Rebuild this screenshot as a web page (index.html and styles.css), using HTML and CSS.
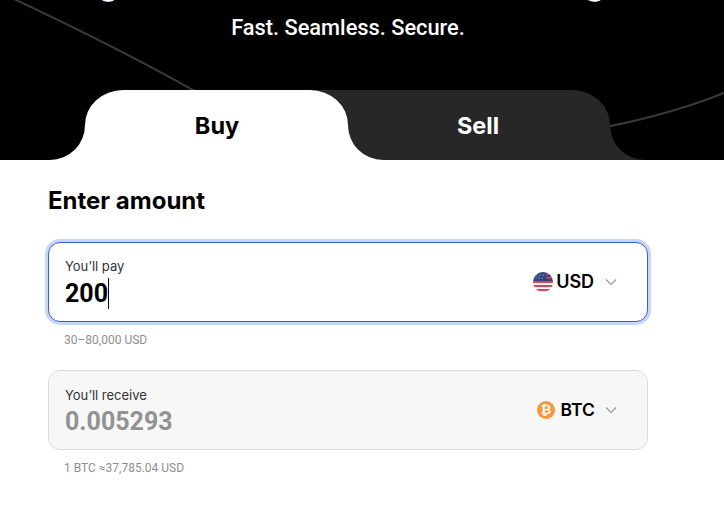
FILE: index.html
```html
<!DOCTYPE html>
<html lang="en">
<head>
<meta charset="utf-8">
<title>Buy crypto</title>
<link rel="stylesheet" href="styles.css">
</head>
<body>
<header class="hero">
  <svg class="hero-lines" width="724" height="160" viewBox="0 0 724 160" aria-hidden="true">
    <path d="M14 -1 C 80 30, 140 60, 200 94" />
    <path d="M606 127 C 650 118, 690 107, 726 92" />
  </svg>
  <p class="hero-title"><span>g</span><span>g</span></p>
  <p class="hero-sub">Fast. Seamless. Secure.</p>
  <div class="tabs">
    <svg class="tab-shape" width="724" height="70" viewBox="0 0 724 70" aria-hidden="true">
      <path class="sell-shape" d="M300 0 H572 A38 35 0 0 1 610 35 A35 35 0 0 0 645 70 H300 Z" />
      <path class="buy-shape" d="M50 70 A35 35 0 0 0 85 35 A38 35 0 0 1 123 0 H310 A38 35 0 0 1 348 35 A35 35 0 0 0 383 70 Z" />
    </svg>
    <div class="tab-labels">
      <span class="tab tab-buy">Buy</span>
      <span class="tab tab-sell">Sell</span>
    </div>
  </div>
</header>
<main class="content">
  <h1 class="title">Enter amount</h1>
  <section class="field field-active">
    <div class="field-text">
      <span class="field-label">You’ll pay</span>
      <span class="field-value">200<i class="caret"></i></span>
    </div>
    <div class="currency currency-usd">
      <svg class="cur-icon" width="20" height="20" viewBox="0 0 20 20" aria-hidden="true">
        <defs><clipPath id="flag"><circle cx="10" cy="10" r="10"/></clipPath></defs>
        <g clip-path="url(#flag)">
          <rect width="20" height="20" fill="#f2f0f2"/>
          <rect y="9" width="20" height="2" fill="#cf4a5c"/>
          <rect y="13" width="20" height="2" fill="#cf4a5c"/>
          <rect y="17" width="20" height="2" fill="#cf4a5c"/>
          <rect width="20" height="9" fill="#33457e"/>
          <rect y="5" x="13" width="7" height="1.6" fill="#cf4a5c"/>
          <rect y="1.5" x="13" width="7" height="1.6" fill="#cf4a5c"/>
          <g fill="#c6cbe0"><circle cx="4" cy="3" r=".6"/><circle cx="7" cy="3" r=".6"/><circle cx="10" cy="3" r=".6"/><circle cx="3" cy="6" r=".6"/><circle cx="6" cy="6" r=".6"/><circle cx="9" cy="6" r=".6"/></g>
        </g>
      </svg>
      <span class="cur-code">USD</span>
      <svg class="chev" width="12" height="8" viewBox="0 0 12 8" aria-hidden="true"><path d="M1 1.5 L6 6.5 L11 1.5"/></svg>
    </div>
  </section>
  <p class="hint">30–80,000 USD</p>
  <section class="field field-muted">
    <div class="field-text">
      <span class="field-label">You’ll receive</span>
      <span class="field-value value-muted">0.005293</span>
    </div>
    <div class="currency currency-btc">
      <svg class="cur-icon" width="18" height="18" viewBox="0 0 18 18" aria-hidden="true">
        <circle cx="9" cy="9" r="9" fill="#f7983c"/>
        <text x="9" y="13.2" text-anchor="middle" class="btc-glyph">₿</text>
      </svg>
      <span class="cur-code">BTC</span>
      <svg class="chev" width="12" height="8" viewBox="0 0 12 8" aria-hidden="true"><path d="M1 1.5 L6 6.5 L11 1.5"/></svg>
    </div>
  </section>
  <p class="hint">1 BTC ≈37,785.04 USD</p>
</main>
</body>
</html>
```
FILE: styles.css
```css
* { box-sizing: border-box; }
html, body { margin: 0; padding: 0; background: #fff; }
body { width: 724px; height: 525px; overflow: hidden; font-family: Inter, "Liberation Sans", sans-serif; color: #000; }
.hero { position: relative; height: 160px; background: #000; display: flex; flex-direction: column; overflow: hidden; padding-right: 28px; }
.hero-lines { position: absolute; left: 0; top: 0; }
.hero-lines path { fill: none; stroke: #3a3a3a; stroke-width: 2; }
.hero-title { position: relative; display: flex; justify-content: center; gap: 465px; height: 40px; margin: -38px 0 0 7px; font-size: 34px; line-height: 40px; font-weight: 700; color: #fff; }
.hero-sub { margin: 13px 0 0; text-align: center; font-family: Roboto, sans-serif; font-size: 21.8px; line-height: 26px; font-weight: 500; color: #fff; position: relative; }
.tabs { position: relative; margin-top: auto; height: 70px; width: 724px; }
.tab-shape { position: absolute; left: 0; top: 0; }
.sell-shape { fill: #272727; }
.buy-shape { fill: #fff; }
.tab-labels { position: absolute; inset: 0; }
.tab { position: absolute; top: 21px; font-size: 23.5px; line-height: 30px; font-weight: 700; transform: translateX(-50%); }
.tab-buy { left: 217px; color: #000; }
.tab-sell { left: 478px; color: #fff; }
.content { padding: 26px 0 0 48px; width: 648px; }
.title { margin: 0 0 26px; font-size: 24px; line-height: 30px; font-weight: 700; }
.field { height: 80px; border-radius: 12px; display: flex; align-items: center; justify-content: space-between; padding: 0 30px 0 16px; }
.field-active { background: #fff; border: 1px solid #3a5be0; box-shadow: 0 0 0 3px #c9d6fb; }
.field-muted { background: #f7f7f7; border: 1px solid #dcdcdc; }
.field-text { display: flex; flex-direction: column; gap: 4px; padding-top: 3px; }
.field-label { font-size: 13px; line-height: 16px; color: #333; }
.field-value { font-family: Roboto, sans-serif; font-size: 25px; line-height: 30px; font-weight: 700; color: #000; display: flex; align-items: center; }
.value-muted { color: #929292; }
.caret { display: inline-block; width: 1px; height: 31px; background: #000; }
.currency { display: flex; align-items: center; }
.cur-icon { display: block; }
.cur-code { font-size: 18px; line-height: 24px; font-weight: 600; }
.currency-usd .cur-code { margin-left: 3px; letter-spacing: -0.1px; }
.currency-usd .chev { margin-left: 11px; }
.currency-btc .cur-code { margin-left: 6px; font-size: 17.5px; }
.currency-btc .chev { margin-left: 10px; }
.chev path { fill: none; stroke: #999; stroke-width: 1.2; }
.btc-glyph { font-size: 13px; font-weight: 700; fill: #fff; font-family: "DejaVu Sans", sans-serif; }
.hint { margin: 11px 0 22px 16px; font-family: Roboto, sans-serif; font-size: 12px; line-height: 15px; color: #8f8f8f; }
```
